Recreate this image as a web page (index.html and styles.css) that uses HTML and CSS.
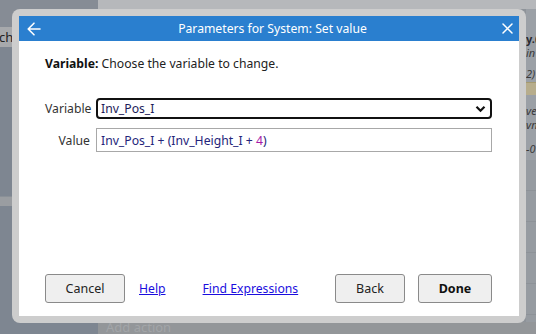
FILE: index.html
```html
<!DOCTYPE html>
<html>
<head>
<meta charset="utf-8">
<link rel="stylesheet" href="styles.css">
</head>
<body>
<div class="backdrop">
  <div class="bg-left">
    <div class="bg-top-dark"></div>
    <div class="bg-tab">ch</div>
    <div class="bg-fill bg-fill-a"></div>
    <div class="bg-band"></div>
    <div class="bg-fill"></div>
  </div>
  <div class="bg-right">
    <div class="bg-topbar"></div>
    <div class="bg-main"></div>
    <div class="bg-side">
      <div class="bs-bold">y.(</div>
      <div class="bs-it">in</div>
      <div class="bs-it bs-gap">2)</div>
      <div class="bs-tan"></div>
      <div class="bs-it bs-gap2">ve</div>
      <div class="bs-it">vn</div>
      <div class="bs-it bs-gap3">-0</div>
      <div class="bs-rows"></div>
    </div>
    <div class="bg-bottom">Add action</div>
  </div>
</div>

<div class="modal-frame">
  <div class="modal">
    <div class="modal-head">
      <svg class="icon-back" width="14" height="14" viewBox="0 0 14 14"><path d="M13 7H1.5M7 1.2L1.2 7L7 12.8" fill="none" stroke="#fff" stroke-width="1.6" stroke-linecap="round" stroke-linejoin="round"/></svg>
      <div class="modal-title">Parameters for System: Set value</div>
      <svg class="icon-close" width="11" height="11" viewBox="0 0 11 11"><path d="M1 1L10 10M10 1L1 10" fill="none" stroke="#fff" stroke-width="1.5" stroke-linecap="round"/></svg>
    </div>
    <div class="modal-body">
      <p class="intro"><b>Variable:</b> Choose the variable to change.</p>
      <div class="form">
        <label class="lbl">Variable</label>
        <div class="select">
          <span>Inv_Pos_I</span>
          <svg class="chev" width="11" height="8" viewBox="0 0 11 8"><path d="M1.5 1.8L5.5 5.8L9.5 1.8" fill="none" stroke="#111" stroke-width="2.2"/></svg>
        </div>
        <label class="lbl">Value</label>
        <div class="input"><span class="expr">Inv_Pos_I + (Inv_Height_I + <span class="num">4</span>)</span></div>
      </div>
      <div class="actions">
        <button class="btn btn-cancel">Cancel</button>
        <a class="link link-help" href="#">Help</a>
        <a class="link link-find" href="#">Find Expressions</a>
        <span class="spacer"></span>
        <button class="btn btn-back">Back</button>
        <button class="btn btn-done">Done</button>
      </div>
    </div>
  </div>
</div>
</body>
</html>
```

FILE: styles.css
```css
* { box-sizing: border-box; }
html, body { margin: 0; padding: 0; }
body {
  width: 536px;
  height: 334px;
  overflow: hidden;
  position: relative;
  font-family: "Noto Sans", "Open Sans", sans-serif;
  font-size: 12.2px;
}

/* dimmed page behind the dialog */
.backdrop {
  display: grid;
  grid-template-columns: 98px 1fr;
  width: 536px;
  height: 334px;
  background: #7d8590;
}
.bg-left { display: flex; flex-direction: column; }
.bg-top-dark { height: 27px; background: #868c95; }
.bg-tab {
  height: 20px;
  background: #a7a9ac;
  color: #222;
  font-size: 13px;
  line-height: 20px;
  text-indent: -1px;
}
.bg-fill { flex: 1; background: #7e8691; }
.bg-fill-a { flex: none; height: 149px; }
.bg-band { height: 10px; background: #9a9da1; border-top: 1px solid #8a9097; }

.bg-right {
  display: grid;
  grid-template-columns: 1fr 10px;
  grid-template-rows: 9px 1fr 12px;
}
.bg-topbar { grid-column: 1 / 3; background: #b6b8bb; }
.bg-main { background: #8e9399; }
.bg-side {
  background: #9ba0a6;
  font-size: 11px;
  color: #2a2a2a;
  overflow: hidden;
  white-space: nowrap;
  display: flex;
  flex-direction: column;
}
.bs-bold { font-weight: bold; margin-top: 22px; line-height: 15px; color: #2a2a30; }
.bs-it { font-style: italic; line-height: 14px; color: #3a3a3a; }
.bs-gap { margin-top: 7px; }
.bs-tan { height: 13px; background: #b7ad8c; margin-top: 1px; border-top: 1px solid #a59a70; }
.bs-gap2 { margin-top: 9px; }
.bs-gap3 { margin-top: 10px; }
.bs-rows {
  flex: 1;
  margin-top: 4px;
  background: repeating-linear-gradient(#969ba1 0 30px, #8d9298 30px 31px);
}
.bg-bottom {
  grid-column: 1 / 3;
  background: #939699;
  color: #a2a5a8;
  font-size: 13px;
  line-height: 10px;
  padding-left: 8px;
  overflow: hidden;
}

/* dialog */
.modal-frame {
  position: absolute;
  left: 12px;
  top: 9px;
  width: 514px;
  height: 314px;
  background: #cdcdcd;
  border-radius: 8px;
  padding: 7px;
}
.modal {
  width: 500px;
  height: 300px;
  background: #fff;
  display: flex;
  flex-direction: column;
}
.modal-head {
  height: 25px;
  background: #2a7fcf;
  display: flex;
  align-items: center;
  padding: 0 6px 0 8px;
}
.icon-back { display: block; flex: none; }
.icon-close { display: block; flex: none; }
.modal-title {
  flex: 1;
  text-align: center;
  color: #fff;
  font-size: 12.2px;
  padding-left: 2px;
}

.modal-body {
  flex: 1;
  display: flex;
  flex-direction: column;
  padding: 14px 27px 13px 26px;
  color: #222;
}
.intro {
  margin: 0;
  line-height: 18px;
  color: #222;
}
.intro b { color: #111; }

.form {
  display: grid;
  grid-template-columns: 45px 1fr;
  column-gap: 6px;
  row-gap: 9px;
  align-items: center;
  margin-top: 25px;
}
.lbl { text-align: right; color: #333; }
.select {
  height: 21px;
  border: 2px solid #111;
  border-radius: 4px;
  display: flex;
  align-items: center;
  justify-content: space-between;
  padding: 0 4px 0 3px;
  color: #1c1c5a;
}
.chev { display: block; }
.input {
  height: 24px;
  border: 1px solid #a8a8a8;
  display: flex;
  align-items: center;
  padding: 0 4px;
}
.expr { color: #24247a; }
.num { color: #a61aa8; }

.actions {
  margin-top: auto;
  display: flex;
  align-items: center;
}
.btn {
  height: 29px;
  background: #efefef;
  border: 1px solid #8a8a8a;
  border-radius: 3px;
  font-family: inherit;
  font-size: 12.5px;
  color: #222;
  padding: 0;
}
.btn-cancel { width: 80px; }
.btn-back { width: 70px; }
.btn-done { width: 74px; margin-left: 13px; font-weight: bold; color: #111; }
.link { color: #1a0dde; text-decoration: underline; }
.link-help { margin-left: 14px; }
.link-find { margin-left: 37px; }
.spacer { flex: 1; }
```
